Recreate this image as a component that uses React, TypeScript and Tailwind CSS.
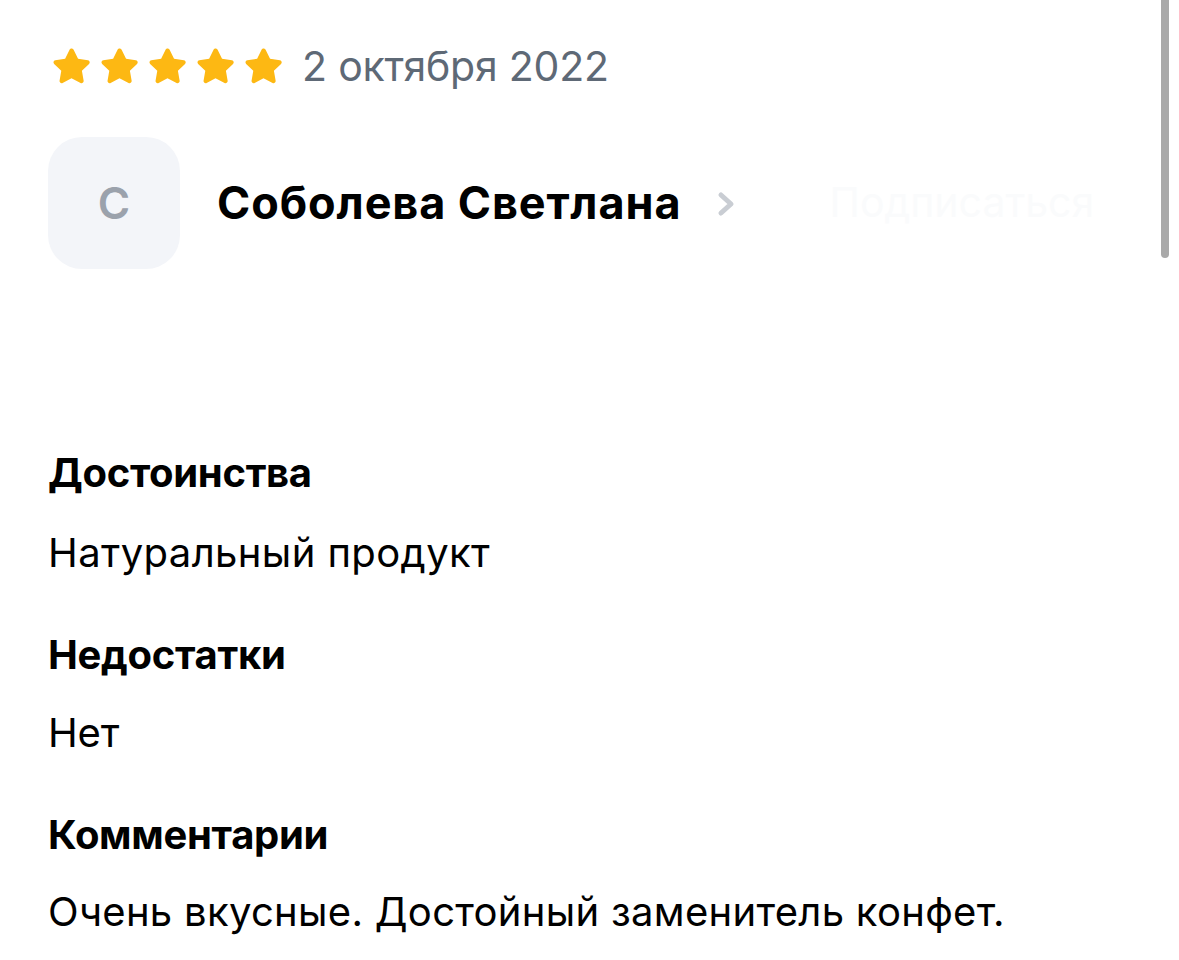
import React from "react";

function Star() {
  return (
    <svg width="37" height="36" viewBox="2.4 2.4 19.2 18.6" className="shrink-0">
      <path
        d="M12 2.6c.5 0 .9.3 1.1.7l2.3 4.7 5.1.7c.9.1 1.3 1.3.6 1.9l-3.7 3.6.9 5.1c.2.9-.8 1.6-1.6 1.2L12 18.1l-4.6 2.4c-.8.4-1.8-.3-1.6-1.2l.9-5.1-3.7-3.6c-.7-.6-.3-1.8.6-1.9l5.1-.7 2.3-4.7c.1-.4.5-.7 1-.7z"
        fill="#FDB813"
      />
    </svg>
  );
}

export default function App() {
  const font = { fontFamily: "Inter, 'Noto Sans', sans-serif" } as React.CSSProperties;
  return (
    <div className="relative w-[1179px] h-[960px] bg-white overflow-hidden" style={font}>
      <div className="absolute right-[10px] top-0 w-[8px] h-[258px] bg-[#a9a9a9] rounded-b-full" />
      <div className="flex flex-col pl-[48px] pt-[45px]">
        <div className="flex items-center h-[42px]">
          <div className="flex items-center gap-[11px] pl-[5px]">
            <Star />
            <Star />
            <Star />
            <Star />
            <Star />
          </div>
          <span className="ml-[20px] text-[41px] leading-none text-[#5e6976] tracking-[-0.2px]">
            2 октября 2022
          </span>
        </div>
        <div className="flex items-center mt-[50px]">
          <div className="w-[132px] h-[132px] rounded-[34px] bg-[#f3f5f9] flex items-center justify-center">
            <span className="text-[44px] font-semibold text-[#9ba2ac]">С</span>
          </div>
          <span className="ml-[37px] text-[45px] font-bold text-black tracking-[0.9px]">
            Соболева Светлана
          </span>
          <svg width="22" height="26" viewBox="0 0 22 26" className="ml-[34px] mt-[2px]">
            <path d="M6 4l10 9-10 9" fill="none" stroke="#c9cdd3" strokeWidth="5" strokeLinecap="round" strokeLinejoin="round" />
          </svg>
          <span className="ml-[92px] text-[41px] text-[#fafbfc]">Подписаться</span>
        </div>
        <div className="h-[180px]" />
        <div className="flex flex-col">
          <h3 className="text-[40px] font-bold leading-[48px] text-black tracking-[-0.3px]">Достоинства</h3>
          <p className="mt-[32px] text-[40px] leading-[48px] text-black tracking-[0.4px]">Натуральный продукт</p>
          <h3 className="mt-[54px] text-[40px] font-bold leading-[48px] text-black tracking-[-0.3px]">Недостатки</h3>
          <p className="mt-[30px] text-[40px] leading-[48px] text-black tracking-[-0.2px]">Нет</p>
          <h3 className="mt-[54px] text-[40px] font-bold leading-[48px] text-black tracking-[-0.3px]">Комментарии</h3>
          <p className="mt-[29px] text-[40px] leading-[48px] text-black tracking-[0.3px]">
            Очень вкусные. Достойный заменитель конфет.
          </p>
        </div>
      </div>
    </div>
  );
}
